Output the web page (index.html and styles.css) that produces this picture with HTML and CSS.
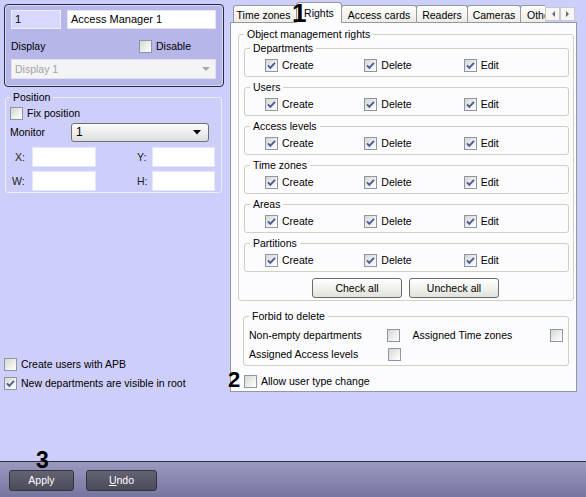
FILE: index.html
```html
<!DOCTYPE html>
<html>
<head>
<meta charset="utf-8">
<link rel="stylesheet" href="styles.css">
</head>
<body>
<div class="app">
  <div class="main">
    <div class="left">
      <div class="idbox">
        <div class="r1">
          <div class="field f-id">1</div>
          <div class="field f-name">Access Manager 1</div>
        </div>
        <div class="r2">
          <span class="lbl">Display</span>
          <span class="chk"><span class="cb"></span>Disable</span>
        </div>
        <div class="sel-dis"><span>Display 1</span><svg width="8" height="5" viewBox="0 0 8 5"><path d="M0 0H8L4 4Z" fill="#a8a8a8"/></svg></div>
      </div>

      <fieldset class="pos">
        <legend>Position</legend>
        <div class="chk fix"><span class="cb"></span>Fix position</div>
        <div class="mon">
          <span class="lbl">Monitor</span>
          <div class="sel-mon"><span>1</span><svg width="8" height="5" viewBox="0 0 8 5"><path d="M0 0H8L4 4.5Z" fill="#000"/></svg></div>
        </div>
        <div class="xy">
          <span class="ax">X:</span><div class="coord"></div>
          <span class="ax2">Y:</span><div class="coord r"></div>
        </div>
        <div class="xy">
          <span class="ax w">W:</span><div class="coord"></div>
          <span class="ax2">H:</span><div class="coord r"></div>
        </div>
      </fieldset>

      <div class="opts">
        <div class="chk"><span class="cb"></span>Create users with APB</div>
        <div class="chk"><span class="cb"><svg width="9" height="9" viewBox="0 0 9 9"><path d="M1 4.4l2.3 2.4L8 1.8" fill="none" stroke="#4b5b9c" stroke-width="1.9"/></svg></span>New departments are visible in root</div>
      </div>
    </div>

    <div class="right">
      <div class="tabbar">
        <div class="tabs">
          <div class="tab t1">Time zones</div>
          <div class="tab t2 on">Rights</div>
          <div class="tab t3">Access cards</div>
          <div class="tab t4">Readers</div>
          <div class="tab t5">Cameras</div>
          <div class="tab t6">Other</div>
        </div>
        <div class="scroll">
          <div class="sb"><svg width="4" height="6" viewBox="0 0 4 6"><path d="M4 0V6L1 3Z" fill="#6a6a6a"/></svg></div>
          <div class="sb"><svg width="4" height="6" viewBox="0 0 4 6"><path d="M0 0V6L3 3Z" fill="#6a6a6a"/></svg></div>
        </div>
      </div>

      <div class="panel">
        <fieldset class="grp outer">
          <legend>Object management rights</legend>

          <fieldset class="grp sub">
            <legend>Departments</legend>
            <div class="rights">
              <div class="chk"><span class="cb"><svg width="9" height="9" viewBox="0 0 9 9"><path d="M1 4.4l2.3 2.4L8 1.8" fill="none" stroke="#4b5b9c" stroke-width="1.9"/></svg></span>Create</div>
              <div class="chk"><span class="cb"><svg width="9" height="9" viewBox="0 0 9 9"><path d="M1 4.4l2.3 2.4L8 1.8" fill="none" stroke="#4b5b9c" stroke-width="1.9"/></svg></span>Delete</div>
              <div class="chk"><span class="cb"><svg width="9" height="9" viewBox="0 0 9 9"><path d="M1 4.4l2.3 2.4L8 1.8" fill="none" stroke="#4b5b9c" stroke-width="1.9"/></svg></span>Edit</div>
            </div>
          </fieldset>

          <fieldset class="grp sub">
            <legend>Users</legend>
            <div class="rights">
              <div class="chk"><span class="cb"><svg width="9" height="9" viewBox="0 0 9 9"><path d="M1 4.4l2.3 2.4L8 1.8" fill="none" stroke="#4b5b9c" stroke-width="1.9"/></svg></span>Create</div>
              <div class="chk"><span class="cb"><svg width="9" height="9" viewBox="0 0 9 9"><path d="M1 4.4l2.3 2.4L8 1.8" fill="none" stroke="#4b5b9c" stroke-width="1.9"/></svg></span>Delete</div>
              <div class="chk"><span class="cb"><svg width="9" height="9" viewBox="0 0 9 9"><path d="M1 4.4l2.3 2.4L8 1.8" fill="none" stroke="#4b5b9c" stroke-width="1.9"/></svg></span>Edit</div>
            </div>
          </fieldset>

          <fieldset class="grp sub">
            <legend>Access levels</legend>
            <div class="rights">
              <div class="chk"><span class="cb"><svg width="9" height="9" viewBox="0 0 9 9"><path d="M1 4.4l2.3 2.4L8 1.8" fill="none" stroke="#4b5b9c" stroke-width="1.9"/></svg></span>Create</div>
              <div class="chk"><span class="cb"><svg width="9" height="9" viewBox="0 0 9 9"><path d="M1 4.4l2.3 2.4L8 1.8" fill="none" stroke="#4b5b9c" stroke-width="1.9"/></svg></span>Delete</div>
              <div class="chk"><span class="cb"><svg width="9" height="9" viewBox="0 0 9 9"><path d="M1 4.4l2.3 2.4L8 1.8" fill="none" stroke="#4b5b9c" stroke-width="1.9"/></svg></span>Edit</div>
            </div>
          </fieldset>

          <fieldset class="grp sub">
            <legend>Time zones</legend>
            <div class="rights">
              <div class="chk"><span class="cb"><svg width="9" height="9" viewBox="0 0 9 9"><path d="M1 4.4l2.3 2.4L8 1.8" fill="none" stroke="#4b5b9c" stroke-width="1.9"/></svg></span>Create</div>
              <div class="chk"><span class="cb"><svg width="9" height="9" viewBox="0 0 9 9"><path d="M1 4.4l2.3 2.4L8 1.8" fill="none" stroke="#4b5b9c" stroke-width="1.9"/></svg></span>Delete</div>
              <div class="chk"><span class="cb"><svg width="9" height="9" viewBox="0 0 9 9"><path d="M1 4.4l2.3 2.4L8 1.8" fill="none" stroke="#4b5b9c" stroke-width="1.9"/></svg></span>Edit</div>
            </div>
          </fieldset>

          <fieldset class="grp sub">
            <legend>Areas</legend>
            <div class="rights">
              <div class="chk"><span class="cb"><svg width="9" height="9" viewBox="0 0 9 9"><path d="M1 4.4l2.3 2.4L8 1.8" fill="none" stroke="#4b5b9c" stroke-width="1.9"/></svg></span>Create</div>
              <div class="chk"><span class="cb"><svg width="9" height="9" viewBox="0 0 9 9"><path d="M1 4.4l2.3 2.4L8 1.8" fill="none" stroke="#4b5b9c" stroke-width="1.9"/></svg></span>Delete</div>
              <div class="chk"><span class="cb"><svg width="9" height="9" viewBox="0 0 9 9"><path d="M1 4.4l2.3 2.4L8 1.8" fill="none" stroke="#4b5b9c" stroke-width="1.9"/></svg></span>Edit</div>
            </div>
          </fieldset>

          <fieldset class="grp sub">
            <legend>Partitions</legend>
            <div class="rights">
              <div class="chk"><span class="cb"><svg width="9" height="9" viewBox="0 0 9 9"><path d="M1 4.4l2.3 2.4L8 1.8" fill="none" stroke="#4b5b9c" stroke-width="1.9"/></svg></span>Create</div>
              <div class="chk"><span class="cb"><svg width="9" height="9" viewBox="0 0 9 9"><path d="M1 4.4l2.3 2.4L8 1.8" fill="none" stroke="#4b5b9c" stroke-width="1.9"/></svg></span>Delete</div>
              <div class="chk"><span class="cb"><svg width="9" height="9" viewBox="0 0 9 9"><path d="M1 4.4l2.3 2.4L8 1.8" fill="none" stroke="#4b5b9c" stroke-width="1.9"/></svg></span>Edit</div>
            </div>
          </fieldset>

          <div class="btns">
            <button class="btn">Check all</button>
            <button class="btn">Uncheck all</button>
          </div>
        </fieldset>

        <fieldset class="grp forbid">
          <legend>Forbid to delete</legend>
          <div class="frow">
            <span class="fl">Non-empty departments</span><span class="cb"></span>
            <span class="fl fl2">Assigned Time zones</span><span class="cb"></span>
          </div>
          <div class="frow">
            <span class="fl">Assigned Access levels</span><span class="cb"></span>
          </div>
        </fieldset>

        <div class="chk allow"><span class="cb"></span>Allow user type change</div>
      </div>
    </div>
  </div>

  <div class="footer">
    <button class="fbtn apply">Apply</button>
    <button class="fbtn undo"><u>U</u>ndo</button>
  </div>

  <span class="ann a1">1</span>
  <span class="ann a2">2</span>
  <span class="ann a3">3</span>
</div>
</body>
</html>
```

FILE: styles.css
```css
* { box-sizing: border-box; }

body {
  margin: 0;
  font-family: "Liberation Sans", Arial, sans-serif;
  font-size: 10.5px;
  line-height: 13px;
  color: #000;
}

.app {
  position: relative;
  width: 586px;
  height: 497px;
  background: #cecefa;
  overflow: hidden;
  display: flex;
  flex-direction: column;
}

.main { height: 461px; display: flex; flex: none; }
.left { width: 229px; flex: none; }
.right { width: 347px; margin-left: 1px; flex: none; }

/* ---------- left: id box ---------- */
.idbox {
  margin: 4px 0 0 4px;
  width: 220px;
  border: 1px solid #2b2b3e;
  border-radius: 4px;
  background: #b6b6e8;
  padding: 5px 7px 7px 6px;
  box-shadow: inset 0 0 0 1px #d6d6fa;
}
.r1 { display: flex; gap: 6px; }
.field {
  height: 19px;
  border: 1px solid #e2e2f4;
  background: #fff;
  padding: 0 3px;
  line-height: 17px;
  white-space: nowrap;
  font-size: 11px;
}
.f-id { width: 50px; background: #d8d8fe; border-color: #eeeeff; }
.f-name { width: 149px; }
.r2 { display: flex; align-items: center; height: 20px; margin-top: 7px; }
.r2 .lbl { width: 128px; }
.sel-dis {
  margin-top: 3px;
  width: 205px;
  height: 20px;
  background: #f4f4f6;
  border: 1px solid #e0e0ee;
  color: #a3a3a3;
  display: flex;
  align-items: center;
  justify-content: space-between;
  padding: 0 5px 0 3px;
}

/* ---------- left: position ---------- */
fieldset { margin: 0; min-width: 0; }
legend { padding: 0 3px; line-height: 13px; }

.pos {
  margin: 4px 0 0 5px;
  width: 217px;
  border: 1px solid #eeeeff;
  border-radius: 3px;
  padding: 0 4px 1px 4px;
}
.pos .fix { margin-top: 3px; }
.mon { display: flex; align-items: center; margin-top: 3px; height: 19px; }
.mon .lbl { width: 61px; }
.sel-mon {
  width: 138px;
  height: 19px;
  border: 1px solid #6f6f6f;
  border-radius: 3px;
  background: linear-gradient(#fdfdfd, #dedede);
  display: flex;
  align-items: center;
  justify-content: space-between;
  padding: 0 7px 0 4px;
  font-size: 12px;
}
.xy { display: flex; align-items: center; margin-top: 5px; height: 20px; }
.xy + .xy { margin-top: 4px; }
.ax { width: 22px; padding-left: 5px; color: #222; }
.ax.w { padding-left: 2px; }
.ax2 { width: 56px; padding-left: 41px; color: #222; }
.coord { width: 64px; height: 20px; background: #fff; border: 1px solid #e6e6fa; }
.coord.r { width: 63px; }

.opts {
  margin-top: 165px;
  padding-left: 4px;
  display: flex;
  flex-direction: column;
  gap: 6px;
}

/* ---------- checkbox ---------- */
.chk {
  display: flex;
  align-items: center;
  gap: 4px;
  height: 13px;
  white-space: nowrap;
}
.cb {
  width: 13px;
  height: 13px;
  flex: none;
  border: 1px solid #8e96a6;
  background: linear-gradient(135deg, #d6d6d0, #f2f2ef 65%, #fff);
  display: inline-flex;
  align-items: center;
  justify-content: center;
}
.cb svg { display: block; }

/* ---------- right: tabs ---------- */
.tabbar {
  height: 23px;
  display: flex;
  padding-left: 3px;
  position: relative;
  z-index: 2;
}
.tabs {
  width: 312px;
  height: 23px;
  display: flex;
  align-items: flex-end;
  overflow: hidden;
  flex: none;
}
.tab {
  height: 17px;
  margin-bottom: 1px;
  margin-right: -1px;
  border: 1px solid #919b9c;
  border-bottom: none;
  border-radius: 3px 3px 0 0;
  background: linear-gradient(#fefefe, #ecebe7);
  text-align: center;
  padding-top: 3px;
  flex: none;
  white-space: nowrap;
}
.tab.on {
  height: 21px;
  margin-bottom: 0;
  background: #fcfcfe;
  padding-top: 4px;
  position: relative;
  z-index: 1;
}
.t1 { width: 64px; padding-right: 3px; }
.t2 { width: 46px; }
.t3 { width: 76px; }
.t4 { width: 52px; }
.t5 { width: 54px; }
.t6 { width: 44px; text-align: left; padding-left: 6px; }

.scroll { display: flex; margin-top: 7px; }
.sb {
  width: 15px;
  height: 14px;
  border: 1px solid #c8c8c8;
  background: #f6f6f6;
  display: flex;
  align-items: center;
  justify-content: center;
}

/* ---------- right: panel ---------- */
.panel {
  margin-top: -1px;
  height: 370px;
  border: 1px solid #919b9c;
  background: #fcfcfe;
  padding: 5px 2px 0 7px;
}
.grp {
  border: 1px solid #d0d0bf;
  border-radius: 3px;
}
.grp legend { line-height: 12px; padding: 0 3px; }
.outer { width: 336px; padding: 0 4px 2px 5px; }
.sub { width: 325px; padding: 0 5px 4px 5px; margin-top: 4px; }
.outer > legend + .sub { margin-top: 2px; }
.rights { display: flex; padding-left: 15px; margin-top: 4px; height: 14px; }
.rights .chk { width: 100px; height: 14px; }

.btns { display: flex; gap: 7px; padding-left: 68px; margin-top: 6px; }
.btn {
  width: 90px;
  height: 20px;
  border: 1px solid #6a6a6a;
  border-radius: 3px;
  background: linear-gradient(#ffffff, #e3e3dc);
  font: inherit;
  color: #000;
  padding: 0;
  text-align: center;
  line-height: 18px;
}

.forbid { width: 326px; margin: 9px 0 0 5px; padding: 0 5px 4px 5px; }
.frow { display: flex; align-items: center; height: 14px; margin-top: 6px; }
.frow + .frow { margin-top: 5px; }
.fl { width: 139px; white-space: nowrap; }
.fl2 { margin-left: 13px; }
.allow { margin: 9px 0 0 6px; }

/* ---------- footer ---------- */
.footer {
  height: 36px;
  flex: none;
  border-top: 1px solid #2c2c3c;
  background: linear-gradient(#9a9ac0, #7575a0);
  display: flex;
  gap: 12px;
  padding: 8px 0 0 9px;
}
.fbtn {
  height: 21px;
  border: 1px solid #34343f;
  border-radius: 3px;
  background: linear-gradient(#636373, #4b4b59);
  color: #fff;
  font: inherit;
  line-height: 19px;
  text-align: center;
  padding: 0;
}
.apply { width: 65px; }
.undo { width: 71px; }

/* ---------- annotations ---------- */
.ann {
  position: absolute;
  z-index: 10;
  font-family: "Liberation Sans", Arial, sans-serif;
  font-weight: bold;
  line-height: 1;
  color: #000;
}
.a1 { font-size: 26px; left: 292px; top: 0; }
.a2 { font-size: 22px; left: 228px; top: 369px; }
.a3 { font-size: 23px; left: 36px; top: 449px; }
```
